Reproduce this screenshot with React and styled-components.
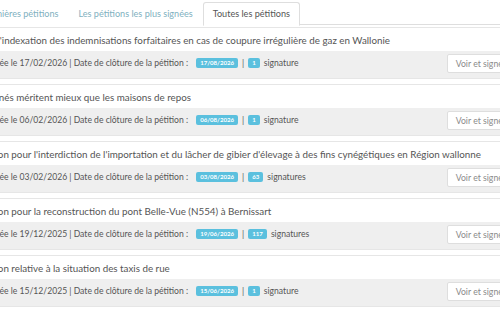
import React from 'react';
import styled, { createGlobalStyle } from 'styled-components';

const GlobalStyle = createGlobalStyle`
    html, body {
        margin: 0;
        padding: 0;
        background: #fff;
        overflow: hidden;
    }
    body {
        font-family: Lato, "Open Sans", sans-serif;
        color: #555;
    }
`

const Page = styled.div`
    width: 562px;
    margin-left: -36px;
`
const TabList = styled.ul`
    display: flex;
    list-style: none;
    margin: 0;
    padding: 0 0 0 8px;
    height: 24px;
    border-bottom: 1px solid #dedede;
`
const Tab = styled.li`
    margin-top: 2px;
    padding: 0 9px;
    height: 22px;
    line-height: 22px;
    font-size: 9.1px;
    color: ${({ active }) => (active ? '#555' : '#7fb1c0')};
    background: #fff;
    border: 1px solid ${({ active }) => (active ? '#dedede' : 'transparent')};
    border-bottom-color: transparent;
    border-radius: 3px 3px 0 0;
    margin-bottom: -1px;
    white-space: nowrap;
`
const PanelList = styled.div`
    padding-top: 2px;
`
const Panel = styled.div`
    border: 1px solid #e6e6e6;
    margin-bottom: 5px;
    background: #fff;
`
const PanelHeading = styled.div`
    height: 21px;
    padding: 2px 10px 0;
    line-height: 21px;
    font-size: 9.8px;
    color: #555;
    white-space: nowrap;
`
const PanelFooter = styled.div`
    display: flex;
    align-items: center;
    justify-content: space-between;
    height: 24px;
    padding: 0 10px 3px;
    background: #efefef;
`
const Meta = styled.div`
    font-size: 8.6px;
    color: #555;
    white-space: nowrap;
    display: flex;
    align-items: center;
`
const Badge = styled.span`
    display: inline-block;
    background: #5bc0de;
    color: #fff;
    font-size: 6.1px;
    font-weight: 700;
    line-height: 10px;
    padding: 0 4px;
    border-radius: 2px;
    margin: 0 4px 0 ${({ lead }) => (lead ? '8px' : '4px')};
`
const Button = styled.a`
    display: inline-block;
    height: 17px;
    line-height: 17px;
    padding: 0 8px;
    font-size: 8.7px;
    color: #8a8a8a;
    background: #fff;
    border: 1px solid #dedede;
    border-radius: 2px;
    white-space: nowrap;
`

const petitions = [
    { title: "Pour l'indexation des indemnisations forfaitaires en cas de coupure irrégulière de gaz en Wallonie", created: '17/02/2026', closing: '17/08/2026', count: 1 },
    { title: 'Les aînés méritent mieux que les maisons de repos', created: '06/02/2026', closing: '06/08/2026', count: 1 },
    { title: "Pétition pour l'interdiction de l'importation et du lâcher de gibier d'élevage à des fins cynégétiques en Région wallonne", created: '03/02/2026', closing: '03/08/2026', count: 63 },
    { title: 'Pétition pour la reconstruction du pont Belle-Vue (N554) à Bernissart', created: '19/12/2025', closing: '19/06/2026', count: 117 },
    { title: 'Pétition relative à la situation des taxis de rue', created: '15/12/2025', closing: '15/06/2026', count: 1 },
];

const App = () => {
    return (
        <Page>
            <GlobalStyle />
            <TabList>
                <Tab>Dernières pétitions</Tab>
                <Tab>Les pétitions les plus signées</Tab>
                <Tab active>Toutes les pétitions</Tab>
            </TabList>
            <PanelList>
                {petitions.map((p) => (
                    <Panel key={p.title}>
                        <PanelHeading>{p.title}</PanelHeading>
                        <PanelFooter>
                            <Meta>
                                Déposée le {p.created} | Date de clôture de la pétition :
                                <Badge lead>{p.closing}</Badge>|<Badge>{p.count}</Badge>
                                {p.count > 1 ? 'signatures' : 'signature'}
                            </Meta>
                            <Button>Voir et signer</Button>
                        </PanelFooter>
                    </Panel>
                ))}
            </PanelList>
        </Page>
    );
};

export default App;
